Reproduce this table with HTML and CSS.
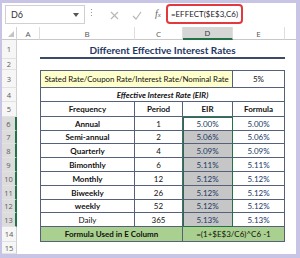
FILE: index.html
```html
<!DOCTYPE html>
<html>
<head>
<meta charset="utf-8">
<link rel="stylesheet" href="styles.css">
</head>
<body>
<div class="frame">
  <div class="win">
    <div class="fbar">
      <div class="namebox">
        <span>D6</span>
        <svg class="caret" width="6" height="4" viewBox="0 0 6 4"><path d="M0 0H6L3 4Z" fill="#555"/></svg>
      </div>
      <div class="vdots"><i></i><i></i><i></i></div>
      <svg class="ic" width="9" height="9" viewBox="0 0 9 9"><path d="M1 1L8 8M8 1L1 8" stroke="#b8b8b8" stroke-width="1.2"/></svg>
      <svg class="ic ok" width="10" height="9" viewBox="0 0 10 9"><path d="M1 5L4 8L9 1" stroke="#b8b8b8" stroke-width="1.2" fill="none"/></svg>
      <span class="fx">f<small>x</small></span>
      <div class="formula">=EFFECT($E$3,C6)</div>
    </div>
    <div class="sheet">
      <div class="row hrow">
        <div class="corner"><svg width="6" height="6" viewBox="0 0 6 6"><path d="M6 0V6H0Z" fill="#c4c4c4"/></svg></div>
        <div class="ch">A</div>
        <div class="ch">B</div>
        <div class="ch">C</div>
        <div class="ch act">D</div>
        <div class="ch">E</div>
        <div class="ch last"></div>
      </div>
      <div class="row r1">
        <div class="rn">1</div><div></div>
        <div class="title">Different Effective Interest Rates</div>
      </div>
      <div class="row r2"><div class="rn">2</div></div>
      <div class="row r3">
        <div class="rn">3</div><div></div>
        <div class="t first top stated">Stated Rate/Coupon Rate/Interest Rate/Nominal Rate</div>
        <div class="t top">5%</div>
      </div>
      <div class="row r4">
        <div class="rn">4</div><div></div>
        <div class="t first eirhead">Effective Interest Rate (EIR)</div>
      </div>
      <div class="row r5">
        <div class="rn">5</div><div></div>
        <div class="t first b">Frequency</div>
        <div class="t b">Period</div>
        <div class="t b">EIR</div>
        <div class="t b">Formula</div>
      </div>
      <div class="row r6">
        <div class="rn sel">6</div><div></div>
        <div class="t first b">Annual</div><div class="t">1</div>
        <div class="t v">5.00%</div><div class="t v">5.00%</div>
      </div>
      <div class="row r7">
        <div class="rn sel">7</div><div></div>
        <div class="t first b">Semi-annual</div><div class="t">2</div>
        <div class="t v g">5.06%</div><div class="t v">5.06%</div>
      </div>
      <div class="row r8">
        <div class="rn sel">8</div><div></div>
        <div class="t first b">Quarterly</div><div class="t">4</div>
        <div class="t v g">5.09%</div><div class="t v">5.09%</div>
      </div>
      <div class="row r9">
        <div class="rn sel">9</div><div></div>
        <div class="t first b">Bimonthly</div><div class="t">6</div>
        <div class="t v g">5.11%</div><div class="t v">5.11%</div>
      </div>
      <div class="row r10">
        <div class="rn sel">10</div><div></div>
        <div class="t first b">Monthly</div><div class="t">12</div>
        <div class="t v g">5.12%</div><div class="t v">5.12%</div>
      </div>
      <div class="row r11">
        <div class="rn sel">11</div><div></div>
        <div class="t first b">Biweekly</div><div class="t">26</div>
        <div class="t v g">5.12%</div><div class="t v">5.12%</div>
      </div>
      <div class="row r12">
        <div class="rn sel">12</div><div></div>
        <div class="t first b">weekly</div><div class="t">52</div>
        <div class="t v g">5.12%</div><div class="t v">5.12%</div>
      </div>
      <div class="row r13">
        <div class="rn sel">13</div><div></div>
        <div class="t first">Daily</div><div class="t">365</div>
        <div class="t v g">5.13%</div><div class="t v">5.13%</div>
      </div>
      <div class="row r14">
        <div class="rn">14</div><div></div>
        <div class="t first green b span2">Formula Used in E Column</div>
        <div class="t green span2">=(1+$E$3/C6)^C6 -1</div>
      </div>
      <div class="row r15"><div class="rn">15</div></div>
      <div class="selection"></div>
    </div>
  </div>
</div>
</body>
</html>
```
FILE: styles.css
```css
html, body {
  margin: 0;
  padding: 0;
}
body {
  width: 300px;
  height: 258px;
  overflow: hidden;
  background: #c8c4e6;
  font-family: Lato, "Liberation Sans", sans-serif;
}
.frame {
  box-sizing: border-box;
  height: 258px;
  padding: 3px 4px 4px 2px;
}
.win {
  background: #fff;
  height: 100%;
  overflow: hidden;
}
.fbar {
  height: 24px;
  display: flex;
  align-items: flex-start;
  box-sizing: border-box;
}
.namebox {
  box-sizing: border-box;
  margin: 2px 0 0 3px;
  width: 80px;
  height: 19px;
  border: 1px solid #d0d0d0;
  display: flex;
  align-items: center;
  justify-content: space-between;
  padding: 0 5px 0 5px;
  font-size: 9px;
  color: #333;
}
.caret { margin-top: 1px; }
.vdots {
  margin: 6px 0 0 6px;
  width: 2px;
  display: flex;
  flex-direction: column;
  gap: 2px;
}
.vdots i {
  display: block;
  width: 1px;
  height: 1px;
  background: #9a9a9a;
}
.ic {
  margin: 8px 0 0 17px;
}
.ic.ok { margin-left: 13px; }
.fx {
  margin: 5px 0 0 13px;
  font-family: "Liberation Serif", serif;
  font-style: italic;
  font-size: 10px;
  color: #666;
}
.fx small { font-size: 7px; }
.formula {
  box-sizing: border-box;
  margin: 1px 0 0 5px;
  width: 77px;
  height: 20px;
  border: 2px solid #e2393f;
  border-radius: 4px;
  padding: 0 0 0 3px;
  display: flex;
  align-items: center;
  font-size: 7.9px;
  letter-spacing: 0.05px;
  color: #222;
  white-space: nowrap;
}
.sheet {
  position: relative;
}
.row {
  display: grid;
  grid-template-columns: 15px 23px 95px 48px 50px 52px 1fr;
}
.row > div {
  box-sizing: border-box;
  display: flex;
  align-items: center;
  justify-content: center;
  font-size: 8px;
  color: #111;
  white-space: nowrap;
  overflow: hidden;
}
.hrow { height: 13px; }
.r1 { height: 19px; }
.r2 { height: 11px; }
.r3 { height: 18px; }
.r4 { height: 14px; }
.r5 { height: 15px; }
.r6 { height: 14px; }
.r7 { height: 13px; }
.r8, .r9, .r10, .r11 { height: 14px; }
.r12 { height: 13px; }
.r13 { height: 14px; }
.r14 { height: 15px; }
.r15 { height: 12px; }

.corner {
  border-right: 1px solid #d4d4d4;
  border-bottom: 1px solid #c8c8c8;
  align-items: flex-end !important;
  justify-content: flex-end !important;
  padding: 0 2px 2px 0;
}
.row > .ch {
  color: #555;
  font-size: 8px;
  border-right: 1px solid #dedede;
  border-bottom: 1px solid #c8c8c8;
  font-family: "Open Sans", sans-serif;
}
.row > .ch.act {
  background: #d6d6d6;
  border-bottom: 2px solid #217346;
  color: #333;
}
.row > .ch.last { border-right: none; }
.row > .rn {
  background: #f6f6f6;
  border-right: 1px solid #cfcfcf;
  border-bottom: 1px solid #e2e2e2;
  color: #5a5a5a;
  font-family: "Open Sans", sans-serif;
  font-size: 7.5px;
}
.row > .rn.sel {
  background: #dcdcdc;
  border-right: 2px solid #217346;
}
.row > .title {
  grid-column: 3 / 7;
  border-bottom: 2px solid #3d4a66;
  color: #1f3864;
  font-weight: bold;
  font-size: 10px;
  padding-top: 2px;
}
.row > .t {
  border-right: 1px solid #55607a;
  border-bottom: 1px solid #55607a;
}
.row > .t.first { border-left: 1px solid #55607a; }
.row > .t.top { border-top: 1px solid #55607a; }
.row > .stated {
  grid-column: 3 / 6;
  background: #ffffcb;
  font-size: 7.9px;
  letter-spacing: -0.05px;
}
.row > .eirhead {
  grid-column: 3 / 7;
  font-weight: bold;
  font-style: italic;
}
.row > .b { font-weight: bold; }
.row > .v { color: #203864; }
.row > .g { background: #c6c6c6; }
.row > .green { background: #a9d08e; }
.row > .span2 { grid-column: span 2; }
.selection {
  position: absolute;
  left: 181px;
  top: 90px;
  width: 50px;
  height: 110px;
  box-sizing: border-box;
  border: 1px solid #217346;
  pointer-events: none;
}
```
